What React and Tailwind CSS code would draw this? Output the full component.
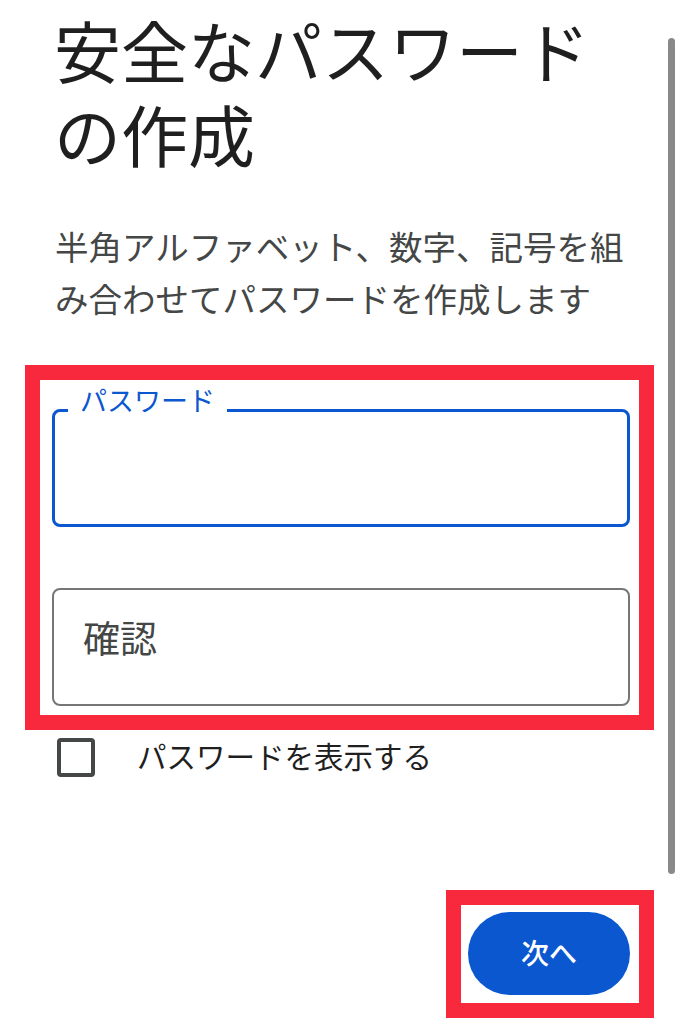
import React from "react";

export default function App() {
  const font = { fontFamily: '"Noto Sans CJK JP", "Noto Sans", sans-serif' };
  return (
    <div
      className="relative w-[682px] h-[1024px] bg-white overflow-hidden flex flex-col pl-[25px] pb-[6px]"
      style={font}
    >
      {/* scroll indicator */}
      <div className="absolute right-[7px] top-[38px] w-[7px] h-[836px] rounded-full bg-[#898989]" />

      <h1 className="ml-[29px] pt-[7px] text-[67px] leading-[84px] font-normal text-[#1f1f1f] w-[580px]">
        安全なパスワードの作成
      </h1>

      <p className="ml-[30px] mt-[45px] text-[33.5px] leading-[52px] text-[#444746] w-[590px]">
        半角アルファベット、数字、記号を組み合わせてパスワードを作成します
      </p>

      <div className="mt-[41px] w-[629px] border-[15px] border-[#f8283d] pt-[29px] pl-[12px] pr-[9px] pb-[9px] flex flex-col gap-[61px]">
        <div className="relative h-[118px] rounded-[8px] border-[3px] border-[#0b57d0]">
          <span className="absolute left-[13px] top-[-26px] bg-white px-[12px] text-[27px] leading-[28px] text-[#0b57d0]">
            パスワード
          </span>
        </div>
        <div className="h-[118px] rounded-[8px] border-2 border-[#747775] flex items-start pt-[27px] pl-[29px]">
          <span className="text-[37px] leading-[40px] text-[#444746]">確認</span>
        </div>
      </div>

      <div className="mt-[8px] ml-[32px] flex items-start gap-[42px]">
        <div className="w-[38px] h-[39px] rounded-[4px] border-[4px] border-[#444746]" />
        <span className="text-[29.5px] leading-[36px] -mt-[1px] text-[#1f1f1f]">パスワードを表示する</span>
      </div>

      <div className="mt-auto self-end mr-[28px] w-[208px] h-[128px] border-[15px] border-[#f8283d] pt-[7px] pl-[7px]">
        <button className="w-[162px] h-[83px] rounded-full bg-[#0b57d0] text-white text-[28px] leading-[32px] font-medium flex items-center justify-center pb-[4px]">
          次へ
        </button>
      </div>
    </div>
  );
}
